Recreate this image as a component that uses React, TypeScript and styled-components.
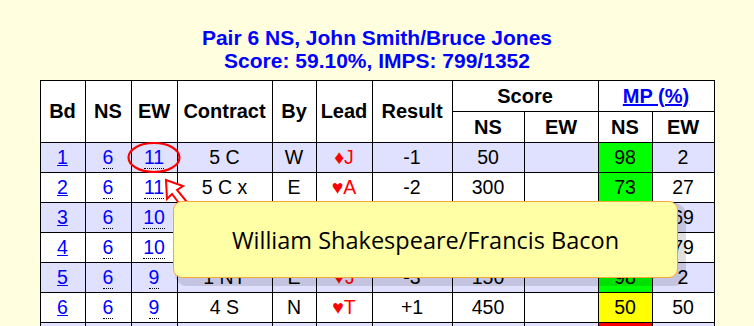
import React from 'react'
import styled, { createGlobalStyle } from 'styled-components'

const GlobalStyle = createGlobalStyle`
  html, body {
    margin: 0;
    padding: 0;
    background: #ffffe0;
  }
  body {
    font-family: 'Liberation Sans', Arial, sans-serif;
  }
`

interface Row {
  bd: number
  ns: number
  ew: number
  contract: string
  by: string
  lead: string
  result: string
  scoreNs: string
  scoreEw: string
  mpNs: number
  mpEw: number
}

const rows: Row[] = [
  { bd: 1, ns: 6, ew: 11, contract: '5 C', by: 'W', lead: '♦J', result: '-1', scoreNs: '50', scoreEw: '', mpNs: 98, mpEw: 2 },
  { bd: 2, ns: 6, ew: 11, contract: '5 C x', by: 'E', lead: '♥A', result: '-2', scoreNs: '300', scoreEw: '', mpNs: 73, mpEw: 27 },
  { bd: 3, ns: 6, ew: 10, contract: '3 NT', by: 'S', lead: '♠4', result: '=', scoreNs: '400', scoreEw: '', mpNs: 31, mpEw: 69 },
  { bd: 4, ns: 6, ew: 10, contract: '4 H', by: 'N', lead: '♣K', result: '-1', scoreNs: '', scoreEw: '50', mpNs: 21, mpEw: 79 },
  { bd: 5, ns: 6, ew: 9, contract: '1 NT', by: 'E', lead: '♥J', result: '-3', scoreNs: '150', scoreEw: '', mpNs: 98, mpEw: 2 },
  { bd: 6, ns: 6, ew: 9, contract: '4 S', by: 'N', lead: '♥T', result: '+1', scoreNs: '450', scoreEw: '', mpNs: 50, mpEw: 50 },
  { bd: 7, ns: 6, ew: 8, contract: '3 S', by: 'W', lead: '♦2', result: '=', scoreNs: '', scoreEw: '140', mpNs: 4, mpEw: 96 },
]

const colWidths = [45, 46, 46, 95, 44, 56, 80, 72, 74, 54, 62]

const Page = styled.div`
  position: relative;
  width: 754px;
  height: 326px;
  overflow: hidden;
  padding-top: 26px;
  box-sizing: border-box;
`

const Title = styled.h1`
  margin: 0;
  text-align: center;
  font-size: 21px;
  line-height: 23px;
  font-weight: bold;
  color: #0000ff;
`

const Table = styled.table`
  margin: 8px auto 0;
  width: 674px;
  table-layout: fixed;
  border-collapse: collapse;
  background: #ffffff;
`

const Col = styled.col<{ $w: number }>`
  width: ${(p) => p.$w}px;
`

const HeadRow = styled.tr`
  height: 31px;
`

const Th = styled.th`
  border: 1px solid #000;
  padding: 0;
  font-size: 20px;
  font-weight: bold;
  color: #000;
  text-align: center;
  vertical-align: middle;
`

const HeadLink = styled.a`
  color: #0000ff;
  text-decoration: underline;
`

const BodyRow = styled.tr<{ $shade: boolean }>`
  height: 30px;
  background: ${(p) => (p.$shade ? '#e0e0ff' : '#ffffff')};
`

const Td = styled.td<{ $bg?: string; $red?: boolean }>`
  border: 1px solid #000;
  padding: 0;
  font-size: 19.5px;
  color: ${(p) => (p.$red ? '#ff0000' : '#000')};
  background: ${(p) => p.$bg ?? 'transparent'};
  text-align: center;
  vertical-align: middle;
`

const BoardLink = styled.a`
  color: #0000ff;
  text-decoration: underline;
`

const PairLink = styled.span`
  color: #0000ff;
  border-bottom: 1px dotted #000;
`

const Circle = styled.svg`
  position: absolute;
  left: 127px;
  top: 142px;
  width: 54px;
  height: 31px;
`

const Pointer = styled.svg`
  position: absolute;
  left: 160px;
  top: 174px;
  width: 40px;
  height: 40px;
`

const Tooltip = styled.div`
  position: absolute;
  left: 173px;
  top: 201px;
  width: 505px;
  height: 77px;
  box-sizing: border-box;
  display: flex;
  align-items: center;
  justify-content: center;
  background: #ffffa6;
  border: 1px solid #f5a83a;
  border-radius: 9px;
  box-shadow: 5px 5px 0 3px rgba(0, 0, 0, 0.12);
  font-family: 'Open Sans', 'Noto Sans', sans-serif;
  font-size: 23.5px;
  color: #000;
`

function mpColor(mp: number) {
  if (mp >= 60) return '#00ff00'
  if (mp >= 40) return '#ffff00'
  return '#ff0000'
}

export default function App() {
  return (
    <Page>
      <GlobalStyle />
      <Title>
        Pair 6 NS, John Smith/Bruce Jones
        <br />
        Score: 59.10%, IMPS: 799/1352
      </Title>

      <Table>
        <colgroup>
          {colWidths.map((w, i) => (
            <Col key={i} $w={w} />
          ))}
        </colgroup>
        <thead>
          <HeadRow>
            <Th rowSpan={2}>Bd</Th>
            <Th rowSpan={2}>NS</Th>
            <Th rowSpan={2}>EW</Th>
            <Th rowSpan={2}>Contract</Th>
            <Th rowSpan={2}>By</Th>
            <Th rowSpan={2}>Lead</Th>
            <Th rowSpan={2}>Result</Th>
            <Th colSpan={2}>Score</Th>
            <Th colSpan={2}>
              <HeadLink href='#'>MP (%)</HeadLink>
            </Th>
          </HeadRow>
          <HeadRow>
            <Th>NS</Th>
            <Th>EW</Th>
            <Th>NS</Th>
            <Th>EW</Th>
          </HeadRow>
        </thead>
        <tbody>
          {rows.map((r, i) => (
            <BodyRow key={r.bd} $shade={i % 2 === 0}>
              <Td>
                <BoardLink href='#'>{r.bd}</BoardLink>
              </Td>
              <Td>
                <PairLink>{r.ns}</PairLink>
              </Td>
              <Td>
                <PairLink>{r.ew}</PairLink>
              </Td>
              <Td>{r.contract}</Td>
              <Td>{r.by}</Td>
              <Td $red>{r.lead}</Td>
              <Td>{r.result}</Td>
              <Td>{r.scoreNs}</Td>
              <Td>{r.scoreEw}</Td>
              <Td $bg={mpColor(r.mpNs)}>{r.mpNs}</Td>
              <Td>{r.mpEw}</Td>
            </BodyRow>
          ))}
        </tbody>
      </Table>

      <Circle viewBox='0 0 54 31'>
        <ellipse cx='27' cy='15.5' rx='25.5' ry='14.5' fill='none' stroke='#ff0000' strokeWidth='2.2' />
      </Circle>

      <Pointer viewBox='0 0 40 40'>
        <polygon
          points='6,6 7,25 12,20 22,33 27,28 17,16 23,12'
          fill='#ffffff'
          stroke='#ff0000'
          strokeWidth='2'
          strokeLinejoin='miter'
        />
      </Pointer>

      <Tooltip>William Shakespeare/Francis Bacon</Tooltip>
    </Page>
  )
}
